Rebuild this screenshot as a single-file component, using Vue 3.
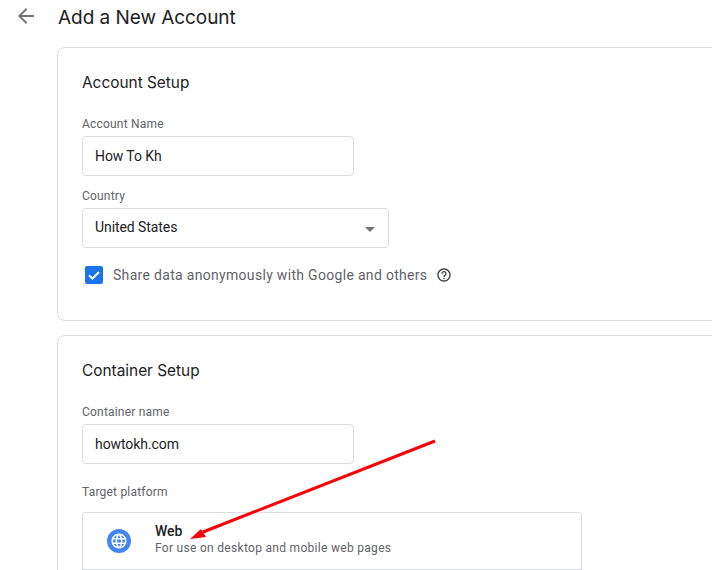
<script setup>
</script>

<template>
  <div class="page">
    <header class="head">
      <svg class="back" width="24" height="24" viewBox="0 0 24 24"><path fill="#757575" d="M20 11H7.83l5.59-5.59L12 4l-8 8 8 8 1.41-1.41L7.83 13H20v-2z"/></svg>
      <h1>Add a New Account</h1>
    </header>
    <section class="card first">
      <h2>Account Setup</h2>
      <label>Account Name</label>
      <div class="field short">How To Kh</div>
      <label class="second">Country</label>
      <div class="field select">United States<span class="caret"></span></div>
      <div class="check">
        <span class="box"><svg width="18" height="18" viewBox="0 0 18 18"><path d="M4 9.2l3.4 3.4L14 6" fill="none" stroke="#fff" stroke-width="2"/></svg></span>
        <span class="checktext">Share data anonymously with Google and others</span>
        <svg class="help" width="16" height="16" viewBox="0 0 24 24"><path fill="#3c4043" d="M11 18h2v-2h-2v2zm1-16C6.48 2 2 6.48 2 12s4.48 10 10 10 10-4.48 10-10S17.52 2 12 2zm0 18c-4.41 0-8-3.59-8-8s3.59-8 8-8 8 3.59 8 8-3.59 8-8 8zm0-14c-2.21 0-4 1.79-4 4h2c0-1.1.9-2 2-2s2 .9 2 2c0 2-3 1.75-3 5h2c0-2.25 3-2.5 3-5 0-2.21-1.79-4-4-4z"/></svg>
      </div>
    </section>
    <section class="card">
      <h2>Container Setup</h2>
      <label>Container name</label>
      <div class="field short">howtokh.com</div>
      <label class="second target">Target platform</label>
      <div class="platforms">
        <div class="platform">
          <div class="globe">
            <svg width="18" height="18" viewBox="0 0 24 24"><path fill="#fff" d="M11.99 2C6.47 2 2 6.48 2 12s4.47 10 9.99 10C17.52 22 22 17.52 22 12S17.52 2 11.99 2zm6.93 6h-2.95c-.32-1.25-.78-2.45-1.38-3.56 1.84.63 3.37 1.91 4.33 3.56zM12 4.04c.83 1.2 1.48 2.53 1.91 3.96h-3.82c.43-1.43 1.08-2.76 1.91-3.96zM4.26 14C4.1 13.36 4 12.69 4 12s.1-1.36.26-2h3.38c-.08.66-.14 1.32-.14 2s.06 1.34.14 2H4.26zm.82 2h2.95c.32 1.25.78 2.45 1.38 3.56-1.84-.63-3.37-1.9-4.33-3.56zm2.95-8H5.08c.96-1.66 2.49-2.93 4.33-3.56C8.81 5.55 8.35 6.75 8.03 8zM12 19.96c-.83-1.2-1.48-2.53-1.91-3.96h3.82c-.43 1.43-1.08 2.76-1.91 3.96zM14.34 14H9.66c-.09-.66-.16-1.32-.16-2s.07-1.35.16-2h4.68c.09.65.16 1.32.16 2s-.07 1.34-.16 2zm.25 5.56c.6-1.11 1.06-2.31 1.38-3.56h2.95c-.96 1.65-2.49 2.93-4.33 3.56zM16.36 14c.08-.66.14-1.32.14-2s-.06-1.34-.14-2h3.38c.16.64.26 1.31.26 2s-.1 1.36-.26 2h-3.38z"/></svg>
          </div>
          <div class="ptext">
            <div class="pname">Web</div>
            <div class="pdesc">For use on desktop and mobile web pages</div>
          </div>
        </div>
        <div class="platform"></div>
      </div>
    </section>
    <svg class="arrow" width="712" height="570" viewBox="0 0 712 570">
      <line x1="435" y1="441" x2="203" y2="532" stroke="#fb0007" stroke-width="3"/>
      <polygon points="190,539 201,529 206,537" fill="#fb0007"/>
    </svg>
  </div>
</template>

<style>
html, body { margin: 0; background: #fff; overflow: hidden; }
</style>

<style scoped>
.page { width: 712px; height: 570px; position: relative; overflow: hidden; background: #fff; font-family: Roboto, "Noto Sans", sans-serif; }
.head { height: 47px; display: flex; align-items: flex-start; padding: 4px 0 0 14px; box-sizing: border-box; }
.back { flex: none; }
h1 { margin: 1px 0 0 20px; font-family: Inter, "Open Sans", sans-serif; font-size: 19px; font-weight: 400; line-height: 26px; letter-spacing: -.05px; color: #202124; }
.card { margin-left: 57px; width: 700px; border: 1px solid #dadce0; border-radius: 8px; box-sizing: border-box; padding: 24px; }
.card.first { height: 274px; margin-bottom: 14px; }
.card:not(.first) { height: 300px; }
h2 { margin: 0 0 23px; font-family: Inter, "Open Sans", sans-serif; font-size: 15.4px; font-weight: 400; line-height: 22px; color: #202124; }
label { display: block; font-size: 12px; line-height: 14px; color: #5f6368; letter-spacing: .2px; margin-bottom: 5px; }
label.second { margin-top: 13px; }
label.target { margin-top: 21px; margin-bottom: 13px; }
.field { box-sizing: border-box; height: 40px; border: 1px solid #dadce0; border-radius: 4px; padding: 0 12px; line-height: 38px; font-size: 14px; color: #202124; letter-spacing: -.08px; position: relative; }
.short { width: 272px; }
.select { width: 307px; line-height: 36px; }
.caret { position: absolute; right: 13px; top: 18px; border: 5px solid transparent; border-top-color: #757575; border-bottom: 0; }
.check { display: flex; align-items: center; margin: 17px 0 0 3px; }
.box { width: 18px; height: 18px; background: #1a73e8; border-radius: 2px; flex: none; display: flex; }
.checktext { margin-left: 10px; font-size: 14px; line-height: 20px; color: #5f6368; letter-spacing: .31px; }
.help { margin-left: 9px; }
.platforms { width: 500px; border: 1px solid #dadce0; border-bottom: 0; border-radius: 4px 4px 0 0; box-sizing: border-box; }
.platform { height: 56px; box-sizing: content-box; border-bottom: 1px solid #dadce0; display: flex; }
.globe { width: 24px; height: 24px; border-radius: 50%; background: #4285f4; display: flex; align-items: center; justify-content: center; margin: 16px 0 0 24px; flex: none; }
.ptext { margin: 9px 0 0 24px; }
.pname { font-size: 14px; font-weight: 500; line-height: 18px; color: #202124; }
.pdesc { font-size: 12px; line-height: 17px; color: #5f6368; letter-spacing: .3px; }
.arrow { position: absolute; left: 0; top: 0; pointer-events: none; }
</style>
